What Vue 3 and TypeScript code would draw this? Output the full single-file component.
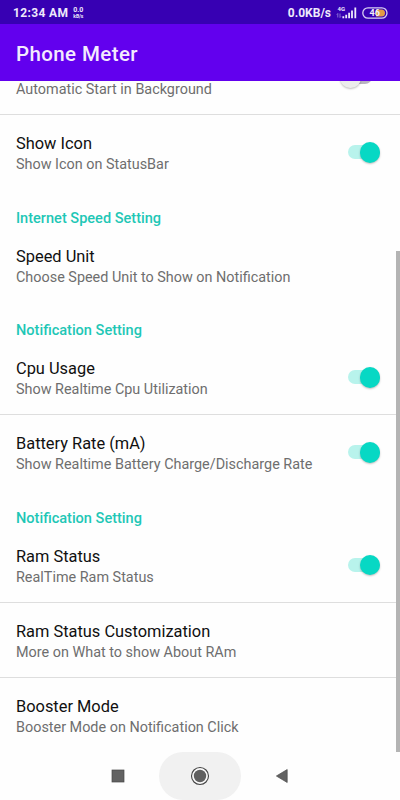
<script setup lang="ts">
import { ref } from 'vue'

interface Preference {
  title?: string
  summary: string
  enabled?: boolean
}

interface Group {
  heading?: string
  items: Preference[]
}

const groups = ref<Group[]>([
  {
    items: [
      { summary: 'Automatic Start in Background', enabled: false },
      { title: 'Show Icon', summary: 'Show Icon on StatusBar', enabled: true },
    ],
  },
  {
    heading: 'Internet Speed Setting',
    items: [{ title: 'Speed Unit', summary: 'Choose Speed Unit to Show on Notification' }],
  },
  {
    heading: 'Notification Setting',
    items: [
      { title: 'Cpu Usage', summary: 'Show Realtime Cpu Utilization', enabled: true },
      { title: 'Battery Rate (mA)', summary: 'Show Realtime Battery Charge/Discharge Rate', enabled: true },
    ],
  },
  {
    heading: 'Notification Setting',
    items: [
      { title: 'Ram Status', summary: 'RealTime Ram Status', enabled: true },
      { title: 'Ram Status Customization', summary: 'More on What to show About RAm' },
      { title: 'Booster Mode', summary: 'Booster Mode on Notification Click' },
    ],
  },
])

function toggle(item: Preference) {
  if (item.enabled !== undefined) item.enabled = !item.enabled
}
</script>

<template>
  <div class="screen">
    <header class="status">
      <span class="clock">12:34 AM</span>
      <span class="rate"><span>0.0</span><span class="unit">kB/s</span></span>
      <span class="speed">0.0KB/s</span>
      <svg class="signal" width="22" height="14" viewBox="0 0 22 14">
        <text x="1.5" y="5.2" class="net">4G</text>
        <path d="M1.8 7.5v4M0.8 8.6l1-1.1M4 7.5v4M5 10.4l-1 1.1" stroke="#9c86dc" stroke-width=".8" fill="none" />
        <path d="M6.4 10.2h1.8v2H6.4zM9.3 8.8h1.8v3.4H9.3zM12.2 6.8H14v5.4h-1.8zM15.1 4.4h1.8v7.8h-1.8zM18.4 1.6h1.8v10.6h-1.8z" fill="#eee9fb" />
      </svg>
      <svg class="battery" width="26" height="12" viewBox="0 0 26 12">
        <rect x=".8" y=".8" width="24.2" height="10.4" rx="5.2" fill="none" stroke="#d8cff3" stroke-width="1.3" />
        <path d="M14 2.5h5.5a3.5 3.5 0 0 1 0 7H14z" fill="#e39b45" />
        <text x="12.7" y="9.3" text-anchor="middle" class="charge">46</text>
      </svg>
    </header>

    <div class="toolbar">Phone Meter</div>

    <main class="viewport">
      <div class="list">
        <section v-for="(group, g) in groups" :key="g" class="group">
          <h2 v-if="group.heading" class="heading">{{ group.heading }}</h2>
          <div v-for="item in group.items" :key="item.summary" class="item" @click="toggle(item)">
            <div class="copy">
              <div class="title">{{ item.title }}</div>
              <div class="summary">{{ item.summary }}</div>
            </div>
            <span v-if="item.enabled !== undefined" class="switch" :class="{ on: item.enabled }">
              <span class="thumb"></span>
            </span>
          </div>
        </section>
      </div>
      <div class="scrollbar"></div>
    </main>

    <nav class="nav">
      <svg width="14" height="14" viewBox="0 0 14 14"><rect x="1" y="1" width="12" height="12" fill="#626262" stroke="#484848" stroke-width=".7" /></svg>
      <span class="home">
        <svg width="20" height="20" viewBox="0 0 20 20">
          <circle cx="10" cy="10" r="8.5" fill="#fafafa" stroke="#444" stroke-width="1.1" />
          <circle cx="10" cy="10" r="6.2" fill="#606060" />
        </svg>
      </span>
      <svg width="14" height="16" viewBox="0 0 14 16"><path d="M1.4 8 12.2 1.5v13z" fill="#626262" stroke="#4c4c4c" stroke-width=".7" /></svg>
    </nav>
  </div>
</template>

<style>
body {
  margin: 0;
}
</style>

<style scoped>
.screen {
  display: flex;
  flex-direction: column;
  width: 400px;
  height: 800px;
  overflow: hidden;
  background: #fefefe;
  font-family: Roboto, sans-serif;
}
.status {
  display: flex;
  align-items: center;
  flex: none;
  height: 24px;
  padding: 1px 12px 0 13px;
  box-sizing: border-box;
  background: #3700b3;
  color: #eee9fb;
}
.clock {
  font-size: 12px;
  font-weight: 700;
  letter-spacing: 0.35px;
}
.rate {
  display: flex;
  flex-direction: column;
  align-items: center;
  margin-left: 5px;
  font-size: 7px;
  font-weight: 700;
  line-height: 8px;
}
.unit {
  font-size: 5px;
  line-height: 6px;
  letter-spacing: -0.1px;
  margin-top: -1px;
}
.speed {
  margin-left: auto;
  font-size: 12px;
  font-weight: 700;
}
.signal {
  margin-left: 5px;
}
.battery {
  margin-left: 4px;
}
.net {
  font-size: 6px;
  font-weight: 700;
  fill: #eee9fb;
}
.charge {
  font-size: 9px;
  font-weight: 700;
  fill: #f2edf9;
}
.toolbar {
  display: flex;
  align-items: center;
  flex: none;
  height: 57px;
  padding: 2px 16px 0;
  box-sizing: border-box;
  background: #6200ee;
  color: #f3eafe;
  font-size: 20.5px;
  font-weight: 500;
  letter-spacing: 0.4px;
}
.viewport {
  position: relative;
  flex: none;
  height: 671px;
  overflow: hidden;
}
.list {
  margin-top: -41.6px;
}
.heading {
  height: 37.5px;
  margin: 0;
  padding: 19.2px 16px 0;
  box-sizing: border-box;
  color: #1fc7b6;
  font-size: 14.56px;
  font-weight: 500;
  line-height: 18px;
}
.item {
  display: flex;
  align-items: flex-start;
  justify-content: space-between;
  height: 75px;
  padding: 0 20px 0 16px;
  box-sizing: border-box;
}
.item + .item {
  box-shadow: inset 0 1px #dedede;
}
.group:last-child {
  border-bottom: 1px solid #efefef;
}
.copy {
  padding-top: 19.7px;
  white-space: nowrap;
}
.title {
  height: 20px;
  color: #101010;
  font-size: 16.4px;
  line-height: 20px;
}
.summary {
  color: #6e6e6e;
  font-size: 14.4px;
  line-height: 21px;
}
.switch {
  display: flex;
  align-items: center;
  width: 32px;
  height: 14px;
  margin-top: 31px;
  border-radius: 7px;
  background: #b9b4c0;
}
.thumb {
  width: 20.5px;
  height: 20.5px;
  margin-left: -8px;
  flex: none;
  border-radius: 50%;
  background: #ececec;
  box-shadow: 0 1px 2px rgba(0, 0, 0, 0.25);
}
.switch:not(.on) {
  width: 24px;
  margin-right: 8px;
}
.switch.on {
  justify-content: flex-end;
  background: #b8f3ec;
}
.switch.on .thumb {
  margin-left: 0;
  background: #07d8c4;
}
.scrollbar {
  position: absolute;
  top: 170px;
  right: 0;
  bottom: 0;
  width: 4px;
  background: #b4b4b4;
}
.nav {
  display: flex;
  align-items: center;
  justify-content: center;
  flex: 1;
  gap: 34px;
  padding-right: 1px;
  background: #fefefe;
}
.home {
  display: flex;
  align-items: center;
  justify-content: center;
  width: 82px;
  height: 48px;
  border-radius: 24px;
  background: #f1f1f1;
}
</style>
